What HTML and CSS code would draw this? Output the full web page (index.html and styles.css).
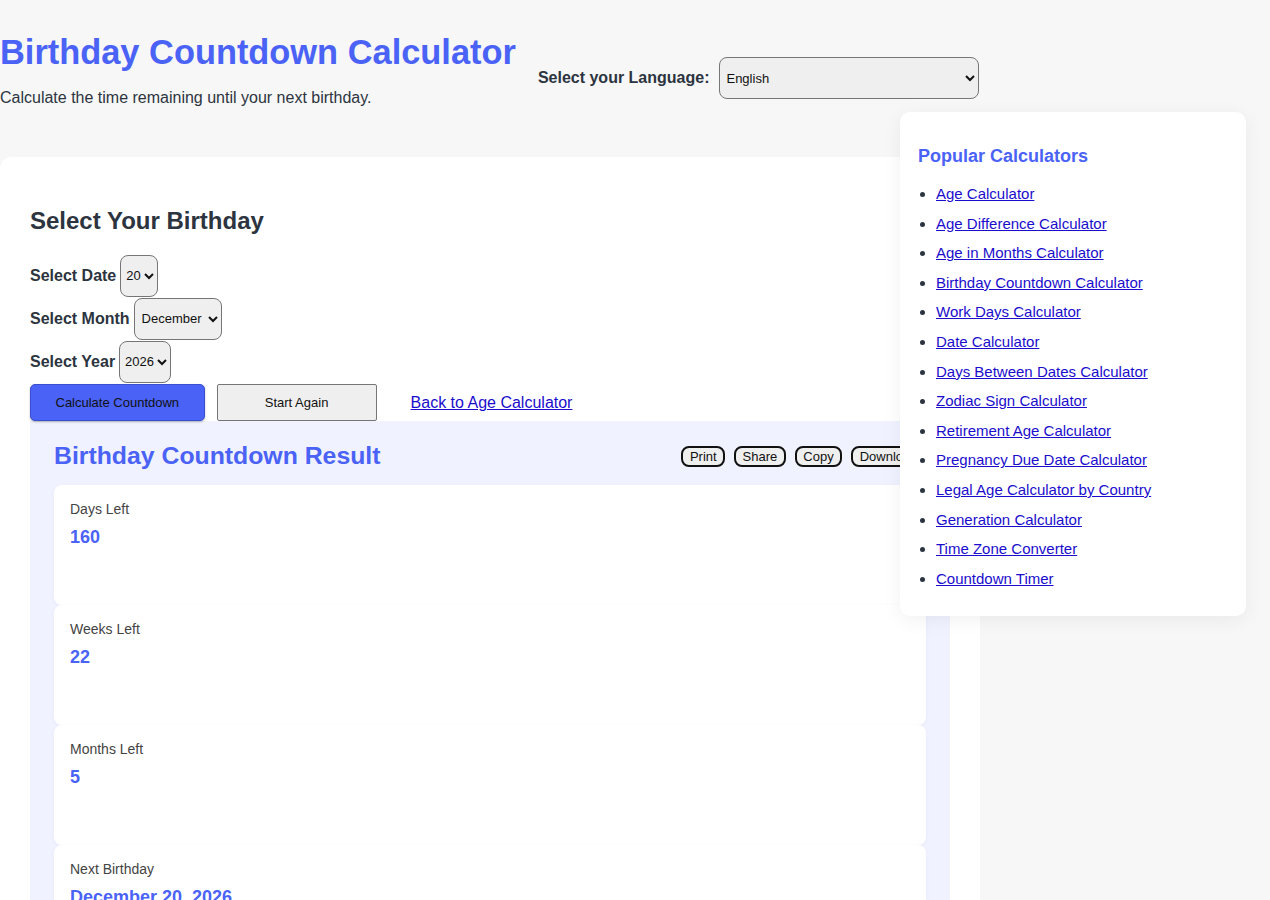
FILE: index.html
```html
<!DOCTYPE html>
<html>
	<head>
		<title>Birthday Countdown Calculator</title>
		<meta charset="utf-8">
		<link rel="stylesheet" href="styles.css">
	</head>

	<body>
		<div class="header">
			<div class="intro">
				<h1>Birthday Countdown Calculator</h1>
				<p>Calculate the time remaining until your next birthday.</p>
			</div>
			<div class="lang">
				<label for="lang">Select your Language:</label>
				<select id="lang">
					<option>English</option>
				</select>
			</div>
		</div>

		<div class="main">
			<h2>Select Your Birthday</h2>
			<div class="field">
				<label>Select Date</label>
				<select class="sm"><option>20</option></select>
			</div>
			<div class="field">
				<label>Select Month</label>
				<select><option>December</option></select>
			</div>
			<div class="field">
				<label>Select Year</label>
				<select class="sm"><option>2026</option></select>
			</div>
			<div class="actions">
				<button class="btn primary">Calculate Countdown</button>
				<button class="btn">Start Again</button>
				<a href="#" class="back">Back to Age Calculator</a>
			</div>

			<div class="result">
				<div class="result-head">
					<h3>Birthday Countdown Result</h3>
					<div class="tools">
						<button>Print</button>
						<button>Share</button>
						<button>Copy</button>
						<button>Download</button>
					</div>
				</div>
				<div class="card">
					<p class="label">Days Left</p>
					<p class="value">160</p>
				</div>
				<div class="card">
					<p class="label">Weeks Left</p>
					<p class="value">22</p>
				</div>
				<div class="card">
					<p class="label">Months Left</p>
					<p class="value">5</p>
				</div>
				<div class="card">
					<p class="label">Next Birthday</p>
					<p class="value">December 20, 2026</p>
				</div>
			</div>
		</div>

		<div class="sidebar">
			<h3>Popular Calculators</h3>
			<ul>
				<li><a href="#">Age Calculator</a></li>
				<li><a href="#">Age Difference Calculator</a></li>
				<li><a href="#">Age in Months Calculator</a></li>
				<li><a href="#">Birthday Countdown Calculator</a></li>
				<li><a href="#">Work Days Calculator</a></li>
				<li><a href="#">Date Calculator</a></li>
				<li><a href="#">Days Between Dates Calculator</a></li>
				<li><a href="#">Zodiac Sign Calculator</a></li>
				<li><a href="#">Retirement Age Calculator</a></li>
				<li><a href="#">Pregnancy Due Date Calculator</a></li>
				<li><a href="#">Legal Age Calculator by Country</a></li>
				<li><a href="#">Generation Calculator</a></li>
				<li><a href="#">Time Zone Converter</a></li>
				<li><a href="#">Countdown Timer</a></li>
			</ul>
		</div>
	</body>
</html>
```

FILE: styles.css
```css
html, body {
	margin: 0;
	padding: 0;
	background-color: #f7f7f7;
	font-family: 'Liberation Sans', Arial, sans-serif;
	color: #2c3440;
}

body {
	position: relative;
	height: 900px;
	overflow: hidden;
}

.header {
	display: flex;
	align-items: flex-start;
	padding-top: 32px;
	height: 125px;
	box-sizing: border-box;
}

.intro h1 {
	margin: 0;
	font-size: 34.4px;
	line-height: 40px;
	color: #4a62f5;
}

.intro p {
	margin: 17px 0 0;
	font-size: 16px;
}

.lang {
	display: flex;
	align-items: center;
	margin: 25px 0 0 22px;
}

.lang label {
	font-weight: bold;
	font-size: 16px;
	margin-right: 10px;
}

.lang select {
	width: 260px;
	height: 42px;
	border-radius: 8px;
	border: 1px solid #767676;
	background-color: #efefef;
	font-family: 'Liberation Sans', Arial, sans-serif;
	font-size: 13px;
	padding: 0 2px;
	color: #111;
}

.main {
	width: 980px;
	margin-top: 32px;
	background-color: #fff;
	border-radius: 12px 12px 0 0;
	padding: 50px 30px 0;
	box-sizing: border-box;
}

.main h2 {
	margin: 0 0 19px;
	font-size: 24px;
	line-height: 28px;
}

.field {
	display: flex;
	align-items: center;
	height: 43px;
}

.field label {
	font-weight: bold;
	font-size: 16px;
	margin-right: 4px;
}

.field select {
	height: 42px;
	border-radius: 8px;
	border: 1px solid #767676;
	background-color: #efefef;
	font-family: 'Liberation Sans', Arial, sans-serif;
	font-size: 13px;
	padding: 0 3px;
	color: #111;
}

.field select.sm {
	padding: 0 0 0 1px;
}

.actions {
	display: flex;
	align-items: center;
	gap: 12px;
	margin-top: 1px;
}

.btn {
	min-width: 160px;
	height: 37px;
	padding: 0 24.5px;
	font-family: 'Liberation Sans', Arial, sans-serif;
	font-size: 13px;
	color: #111;
	background-color: #efefef;
	border: 1px solid #767676;
	border-radius: 2px;
}

.btn.primary {
	background-color: #4a62f5;
	border-color: #3a4fd0;
	border-radius: 5px;
	box-shadow: 0 1px 2px rgba(0,0,0,0.3);
}

.back {
	margin-left: 22px;
	font-size: 16px;
	color: #1a0dcc;
}

.result {
	background-color: #f0f3ff;
	padding: 20px 24px 0;
}

.result-head {
	display: flex;
	align-items: center;
	justify-content: space-between;
	margin-bottom: 14px;
}

.result-head h3 {
	margin: 0;
	font-size: 24.8px;
	line-height: 30px;
	color: #4a62f5;
}

.tools {
	display: flex;
	gap: 9px;
}

.tools button {
	font-family: 'Liberation Sans', Arial, sans-serif;
	font-size: 13px;
	padding: 1px 6.5px;
	color: #111;
	background-color: #efefef;
	border: 2px solid #111;
	border-radius: 8px;
}

.card {
	background-color: #fff;
	height: 120px;
	box-sizing: border-box;
	padding: 15px 16px;
	border-radius: 8px;
	box-shadow: 0 1px 4px rgba(0,0,0,0.04);
}

.card .label {
	margin: 0 0 8px;
	font-size: 14px;
	line-height: 18px;
	color: #444;
}

.card .value {
	margin: 0;
	font-size: 18px;
	line-height: 22px;
	font-weight: bold;
	color: #4a62f5;
}

.sidebar {
	position: absolute;
	top: 112px;
	left: 900px;
	width: 346px;
	height: 504px;
	box-sizing: border-box;
	padding: 33px 18px 0;
	background-color: #fff;
	border-radius: 10px;
	box-shadow: 0 4px 20px rgba(0,0,0,0.06);
}

.sidebar h3 {
	margin: 0 0 18px;
	font-size: 18px;
	line-height: 22px;
	color: #4a62f5;
}

.sidebar ul {
	margin: 0;
	padding-left: 18px;
}

.sidebar li {
	font-size: 15px;
	line-height: 18px;
	margin-bottom: 11.6px;
}

.sidebar a {
	color: #1a0dcc;
}
```
